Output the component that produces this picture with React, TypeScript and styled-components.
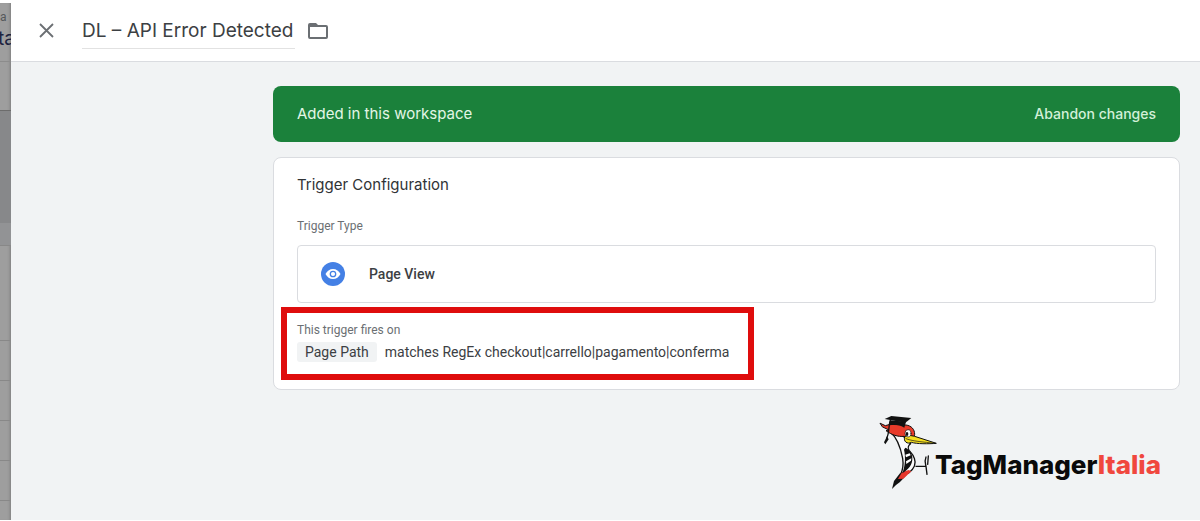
import React from "react";
import styled, { createGlobalStyle } from "styled-components";

const sans = `Inter, "Liberation Sans", sans-serif`;
const body = `Roboto, "Liberation Sans", sans-serif`;

const GlobalStyle = createGlobalStyle`
  * { box-sizing: border-box; }
  html { background: #fff; }
  body { margin: 0; font-family: ${body}; color: #3c4043; }
  button { font: inherit; background: none; border: 0; padding: 0; cursor: pointer; }
`;

const Page = styled.div`
  display: flex;
  min-height: 100vh;
  padding: 3px 0 1px;
  background: #fff;
`;

const Backdrop = styled.aside`
  flex: 0 0 11px;
  display: flex;
  flex-direction: column;
  overflow: hidden;
  background: #9e9e9e;
  box-shadow: inset -3px 0 3px -2px #7d7d7d;
`;

const BackdropHead = styled.div`
  height: 59px;
  padding-top: 6px;
  border-bottom: 1px solid #8c8c8c;
`;

const BackdropSmall = styled.div`
  font: 12px/16px ${body};
  color: #55585b;
`;

const BackdropLarge = styled.div`
  margin-top: 3px;
  margin-left: -2px;
  font: 19px/22px ${sans};
  color: #1d2340;
`;

const Band = styled.div<{ $h: number; $bg?: string; $line?: string }>`
  flex: 0 0 ${(p) => p.$h}px;
  background: ${(p) => p.$bg ?? "transparent"};
  border-bottom: 1px solid ${(p) => p.$line ?? "#888"};
`;

const Sheet = styled.div`
  flex: 1;
  min-width: 0;
  display: flex;
  flex-direction: column;
  background: #f1f3f4;
`;

const Header = styled.header`
  display: flex;
  align-items: center;
  height: 59px;
  padding: 0 27px 3px;
  background: #fff;
  border-bottom: 1px solid #dadce0;
`;

const IconButton = styled.button`
  display: flex;
  color: #6b6f73;
`;

const TitleInput = styled.input`
  width: 213px;
  height: 36px;
  margin: 0 12px 0 27px;
  padding: 0;
  border: 0;
  border-bottom: 1px solid #e2e2e2;
  background: none;
  font: 19px/35px ${sans};
  color: #3c4043;
  outline: 0;
`;

const Content = styled.main`
  flex: 1;
  display: flex;
  flex-direction: column;
  gap: 15px;
  padding: 24px 20px 28px 262px;
`;

const Banner = styled.section`
  display: flex;
  align-items: center;
  justify-content: space-between;
  height: 56px;
  padding: 0 24px;
  border-radius: 8px;
  background: #1b813b;
  color: #e3f6e6;
  font: 15px/24px ${sans};
`;

const BannerAction = styled.button`
  color: #d3f0d8;
  font: 500 14px/24px ${sans};
`;

const Card = styled.section`
  padding: 15px 23px 9px;
  border: 1px solid #dadce0;
  border-radius: 8px;
  background: #fff;
`;

const CardTitle = styled.h2`
  margin: 0 0 19px;
  font: 400 15px/24px ${sans};
  color: #303336;
`;

const Label = styled.div`
  font-size: 12px;
  line-height: 20px;
  color: #6b6f73;
`;

const TypeButton = styled.button`
  display: flex;
  align-items: center;
  gap: 24px;
  width: 100%;
  height: 58px;
  margin-top: 9px;
  padding: 0 23px;
  border: 1px solid #dadce0;
  border-radius: 4px;
  font: 500 14px/20px ${body};
  color: #3c4043;
`;

const Highlight = styled.div`
  width: 473px;
  max-width: 100%;
  margin: 4px 0 0 -16px;
  padding: 7px 10px 12px;
  border: 6px solid #df0d0d;
`;

const Condition = styled.div`
  display: flex;
  align-items: center;
  gap: 8px;
  margin-top: 2px;
  font-size: 14px;
  line-height: 20px;
  white-space: nowrap;
`;

const Chip = styled.span`
  padding: 0 8px;
  border-radius: 3px;
  background: #f1f3f4;
`;

const Brand = styled.div`
  display: flex;
  align-self: flex-end;
  margin: 10px 19px 0 0;
  color: #0a0a0a;
  font: 800 26px/30px ${sans};
`;

const BrandName = styled.div`
  margin-top: 35px;
`;

const Accent = styled.span`
  color: #f0473e;
`;

const Drawing = styled.svg`
  overflow: visible;
`;

function Woodpecker() {
  return (
    <Drawing width="54" height="76" viewBox="33 30 162 228" aria-hidden="true" strokeLinejoin="round" strokeLinecap="round">
      {/* neck and body */}
      <path d="M60 80C82 98 92 128 98 160C101 180 98 195 92 208L116 204C132 192 139 176 133 160C129 147 122 142 117 136C112 128 116 120 122 116L100 94Z" fill="#fbfbfb" stroke="#111" strokeWidth="4" />
      {/* tail */}
      <path d="M90 205L72 228L66 252L78 240L90 231L112 208Z" fill="#111" />
      <path d="M96 202L84 222L100 221L124 199L116 195Z" fill="#e6352b" />
      {/* wing */}
      <path d="M106 128C116 132 126 142 127 158C128 178 116 194 96 205C106 188 107 152 102 134Z" fill="#111" />
      <path d="M106 149L119 145L122 151L108 157ZM108 169L124 160L123 167L109 177Z" fill="#fff" />
      {/* crest and head */}
      <path d="M31 55L46 62L60 58L108 60C124 62 134 73 134 88C134 97 126 102 116 102L102 94C85 96 65 90 48 77L57 75L38 66Z" fill="#e83b2a" stroke="#111" strokeWidth="3" />
      {/* beak */}
      <path d="M104 96C110 88 124 92 134 94L199 115C176 117 140 117 124 112C112 119 99 109 104 96Z" fill="#f5df20" stroke="#111" strokeWidth="3" />
      <path d="M108 101C124 108 158 111 196 115" fill="none" stroke="#111" strokeWidth="2" />
      {/* eye */}
      <ellipse cx="114" cy="85" rx="9" ry="11" fill="#fff" stroke="#111" strokeWidth="2" />
      <ellipse cx="111" cy="87" rx="4" ry="6" fill="#111" />
      {/* graduation cap */}
      <path d="M60 46L59 61C74 57 92 61 103 68L108 50Z" fill="#111" />
      <path d="M44 42L64 33L124 39L106 53Z" fill="#111" />
      <path d="M62 42C54 60 60 80 50 100" fill="none" stroke="#111" strokeWidth="4" />
      <path d="M51 94L42 112L46 118L56 103Z" fill="#111" />
      {/* foot */}
      <path d="M138 184H167M168 156C163 168 166 174 168 184L171 208M175 153L173 178" fill="none" stroke="#111" strokeWidth="4" />
    </Drawing>
  );
}

export default function App() {
  return (
    <>
      <GlobalStyle />
      <Page>
        <Backdrop>
          <BackdropHead>
            <BackdropSmall>a</BackdropSmall>
            <BackdropLarge>ta</BackdropLarge>
          </BackdropHead>
          <Band $h={49} $line="#6c6c6c" />
          <Band $h={112} $bg="#87888a" $line="#87888a" />
          <Band $h={23} $bg="#929395" />
          <Band $h={95} />
          <Band $h={40} />
          <Band $h={40} />
          <Band $h={40} />
          <Band $h={40} />
        </Backdrop>
        <Sheet>
          <Header>
            <IconButton aria-label="Close">
              <svg width="17" height="17" viewBox="0 0 17 17" fill="none" stroke="currentColor" strokeWidth="1.800">
                <path d="M2 2 15 15M15 2 2 15" />
              </svg>
            </IconButton>
            <TitleInput aria-label="Trigger name" defaultValue="DL – API Error Detected" />
            <IconButton aria-label="Choose folder">
              <svg width="22" height="18" viewBox="0 0 22 18" fill="currentColor">
                <path fillRule="evenodd" d="M3 1h6l2 2h8a2 2 0 0 1 2 2v10a2 2 0 0 1-2 2H3a2 2 0 0 1-2-2V3a2 2 0 0 1 2-2Zm0 4v10h16V5Z" />
              </svg>
            </IconButton>
          </Header>
          <Content>
            <Banner>
              <span>Added in this workspace</span>
              <BannerAction>Abandon changes</BannerAction>
            </Banner>
            <Card>
              <CardTitle>Trigger Configuration</CardTitle>
              <Label>Trigger Type</Label>
              <TypeButton>
                <svg width="24" height="24" viewBox="0 0 24 24" aria-hidden="true">
                  <circle cx="12" cy="12" r="12" fill="#4480e5" />
                  <path d="M4.500 12C6 9 8.800 7 12 7s6 2 7.500 5c-1.500 3-4.300 5-7.500 5s-6-2-7.500-5Z" fill="#fff" />
                  <circle cx="12" cy="12" r="2.700" fill="#fff" stroke="#4480e5" strokeWidth="1.300" />
                </svg>
                Page View
              </TypeButton>
              <Highlight>
                <Label>This trigger fires on</Label>
                <Condition>
                  <Chip>Page Path</Chip>
                  <span>matches RegEx checkout|carrello|pagamento|conferma</span>
                </Condition>
              </Highlight>
            </Card>
            <Brand>
              <Woodpecker />
              <BrandName>TagManager<Accent>Italia</Accent></BrandName>
            </Brand>
          </Content>
        </Sheet>
      </Page>
    </>
  );
}
